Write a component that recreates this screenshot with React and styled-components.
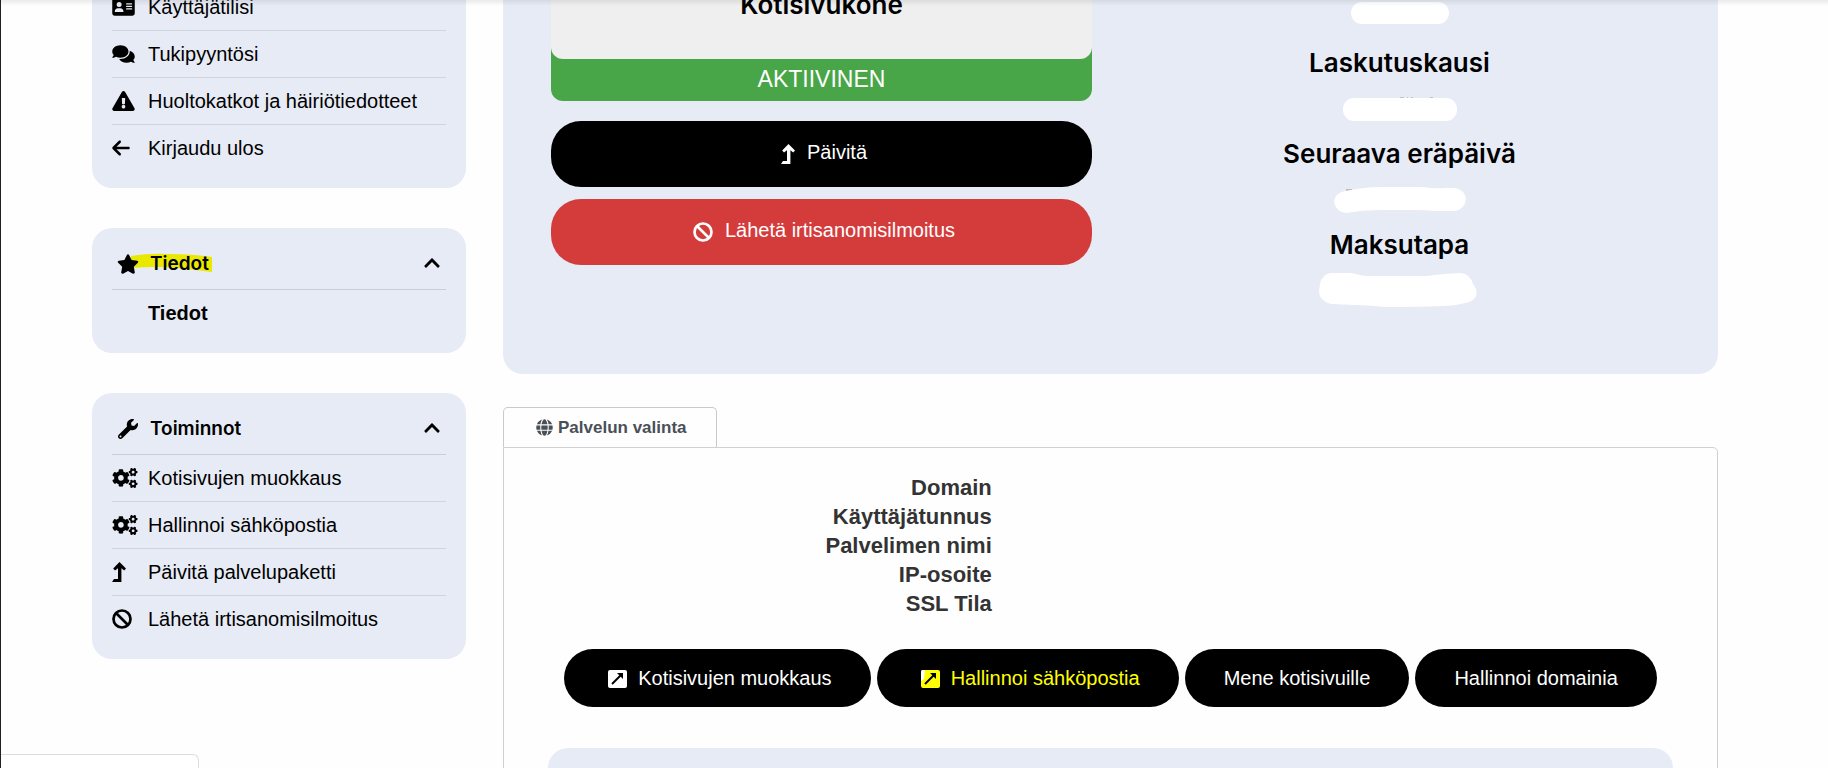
import styled, { createGlobalStyle } from 'styled-components';
import {
  FaChevronUp,
  FaCogs,
  FaComments,
  FaExclamationTriangle,
  FaGlobe,
  FaStar,
  FaWrench,
} from 'react-icons/fa';
import { FaAddressCard, FaArrowLeft } from 'react-icons/fa6';

const LevelUpIcon = () => (
  <svg width='14' height='20' viewBox='0 0 14 20' aria-hidden='true'>
    <path
      d='M7.5 0L14 6.4L12.2 8.6L9.4 6.2V20H0L2 17H6V6.2L3 8.6L1.2 6.4Z'
      fill='currentColor'
    />
  </svg>
);

const BanIcon = () => (
  <svg width='20' height='20' viewBox='0 0 20 20' aria-hidden='true'>
    <g fill='none' stroke='currentColor' strokeWidth='2.7'>
      <circle cx='10' cy='10' r='8.5' />
      <path d='M4 4L16 16' />
    </g>
  </svg>
);

const ExternalIcon = ({ corner }) => (
  <svg width='19' height='19' viewBox='0 0 19 19' aria-hidden='true'>
    <rect x='0' y='1' width='19' height='18' rx='2' fill='currentColor' />
    {corner && <path d='M0 3Q0 1 2 1H4L3 10L0 12Z' fill='#ffffff' />}
    <path d='M4 15L13 6' stroke='#000000' strokeWidth='2' />
    <path d='M9 4H15V10Z' fill='#000000' />
  </svg>
);

const accountLinks = [
  { label: 'Käyttäjätilisi', icon: FaAddressCard, size: 23 },
  { label: 'Tukipyyntösi', icon: FaComments, size: 23 },
  { label: 'Huoltokatkot ja häiriötiedotteet', icon: FaExclamationTriangle, size: 23 },
  { label: 'Kirjaudu ulos', icon: FaArrowLeft, size: 18 },
];

const actionLinks = [
  { label: 'Kotisivujen muokkaus', icon: FaCogs, size: 26 },
  { label: 'Hallinnoi sähköpostia', icon: FaCogs, size: 26 },
  { label: 'Päivitä palvelupaketti', icon: LevelUpIcon, size: 14 },
  { label: 'Lähetä irtisanomisilmoitus', icon: BanIcon, size: 20 },
];

const details = ['Domain', 'Käyttäjätunnus', 'Palvelimen nimi', 'IP-osoite', 'SSL Tila'];

const LinkList = ({ links }) => (
  <List>
    {links.map(({ label, icon: Icon, size }) => (
      <li key={label}>
        <a href='#'>
          <LinkIcon $size={size}>
            <Icon />
          </LinkIcon>
          {label}
        </a>
      </li>
    ))}
  </List>
);

const App = () => {
  return (
    <Page>
      <GlobalStyle />
      <TopShade />
      <Layout>
        <Sidebar>
          <Panel $cut>
            <LinkList links={accountLinks} />
          </Panel>
          <Panel>
            <PanelTitle>
              <FaStar className='icon' />
              <Marked>
                <Marker viewBox='0 0 84 20' aria-hidden='true'>
                  <path d='M2 3Q20 0 40 1Q64 1 83 4V19Q66 17 48 15Q26 13 2 15Z' fill='#e9e900' />
                </Marker>
                <span>Tiedot</span>
              </Marked>
              <button aria-label='Tiedot'>
                <FaChevronUp />
              </button>
            </PanelTitle>
            <List>
              <li>
                <a href='#' className='current'>
                  <LinkIcon />
                  Tiedot
                </a>
              </li>
            </List>
          </Panel>
          <Panel>
            <PanelTitle>
              <FaWrench className='icon' />
              <span>Toiminnot</span>
              <button aria-label='Toiminnot'>
                <FaChevronUp />
              </button>
            </PanelTitle>
            <LinkList links={actionLinks} />
          </Panel>
        </Sidebar>
        <Main>
          <Overview>
            <div>
              <Product>
                <h3>Kotisivukone</h3>
                <p>AKTIIVINEN</p>
              </Product>
              <WideButton>
                <LevelUpIcon />
                Päivitä
              </WideButton>
              <WideButton $danger>
                <BanIcon />
                Lähetä irtisanomisilmoitus
              </WideButton>
            </div>
            <Billing>
              <Hidden width='98' viewBox='0 -14 98 59'>
                <rect width='98' height='22' rx='11' />
              </Hidden>
              <h4>Laskutuskausi</h4>
              <Hidden width='114' viewBox='0 -19 114 59'>
                <path d='M57 0H61M64 0H65M68 0H70M87 0H90' stroke='#999999' />
                <rect width='114' height='23' rx='11' />
              </Hidden>
              <h4>Seuraava eräpäivä</h4>
              <Hidden width='132' viewBox='0 -17 132 59'>
                <path d='M12 3H18' stroke='#888888' />
                <path d='M11 4C22 2 34 0 48 0H88Q102 2 112 1H121Q131 3 132 12Q131 22 121 24H102Q92 23 80 23H45Q28 23 12 26Q2 25 0 15Q1 6 11 4Z' />
              </Hidden>
              <h4>Maksutapa</h4>
              <Hidden width='162' viewBox='0 -12 162 59'>
                <path d='M12 0H32Q44 3 48 3H108Q122 1 142 0Q151 1 154 11Q159 17 157 23Q154 29 146 30Q136 33 122 33Q96 34 66 34Q48 32 36 32L12 31Q0 28 0 18L1 11Q3 1 12 0Z' />
              </Hidden>
            </Billing>
          </Overview>
          <Tab href='#'>
            <FaGlobe />
            Palvelun valinta
          </Tab>
          <TabPanel>
            <Details>
              {details.map((name) => (
                <div key={name}>
                  <dt>{name}</dt>
                  <dd />
                </div>
              ))}
            </Details>
            <Actions>
              <ActionButton>
                <ExternalIcon />
                Kotisivujen muokkaus
              </ActionButton>
              <ActionButton $marked>
                <ExternalIcon corner />
                Hallinnoi sähköpostia
              </ActionButton>
              <ActionButton>Mene kotisivuille</ActionButton>
              <ActionButton>Hallinnoi domainia</ActionButton>
            </Actions>
            <NextCard />
          </TabPanel>
        </Main>
      </Layout>
      <StatusBar />
    </Page>
  );
};

const GlobalStyle = createGlobalStyle`
  * {
    box-sizing: border-box;
    margin: 0;
    padding: 0;
  }

  body {
    background: #fefefe;
    color: #000000;
    font-family: 'Liberation Sans', Arial, sans-serif;
    font-size: 20px;
  }

  a {
    color: inherit;
    text-decoration: none;
  }

  button {
    border: 0;
    font: inherit;
    cursor: pointer;
  }
`;

const Page = styled.div`
  position: relative;
  height: 100vh;
  overflow: hidden;
  border-left: 1px solid #231f20;
`;

const TopShade = styled.div`
  position: absolute;
  top: 0;
  left: 0;
  right: 0;
  z-index: 1;
  height: 6px;
  background: linear-gradient(rgba(0, 0, 0, 0.08), rgba(0, 0, 0, 0));
`;

/* the page stands scrolled a little way into its first rows */
const Layout = styled.div`
  display: grid;
  grid-template-columns: 374px 1fr;
  align-items: start;
  gap: 37px;
  margin-top: -16px;
  padding: 0 110px 0 91px;
`;

const Sidebar = styled.aside`
  display: flex;
  flex-direction: column;
  gap: 40px;
`;

const Panel = styled.section`
  padding: 0 20px 17px;
  border-radius: ${({ $cut }) => ($cut ? '0 0 20px 20px' : '20px')};
  background: #e7ebf5;
`;

const PanelTitle = styled.h2`
  display: flex;
  align-items: center;
  height: 62px;
  padding: 10px 5px 0;
  border-bottom: 1px solid #c9ced8;
  font-family: Inter, sans-serif;
  font-size: 19px;
  font-weight: 600;

  .icon {
    position: relative;
    z-index: 1;
    width: 22px;
    height: 20px;
    margin-right: 11px;
  }

  button {
    display: flex;
    margin: 0 0 2px auto;
    background: none;
    color: #000000;
    font-size: 18px;
  }
`;

const Marked = styled.span`
  position: relative;

  span {
    position: relative;
  }
`;

const Marker = styled.svg`
  position: absolute;
  top: 1px;
  left: -21px;
  width: 84px;
  height: 20px;
`;

const LinkIcon = styled.span`
  display: flex;
  width: 36px;

  svg {
    width: ${({ $size }) => $size}px;
    height: 20px;
  }
`;

const List = styled.ul`
  list-style: none;

  li + li {
    border-top: 1px solid #cfd4dd;
  }

  a {
    display: flex;
    align-items: center;
    height: 46px;
    white-space: nowrap;
  }

  .current {
    font-weight: bold;
  }
`;

const Main = styled.main`
  min-width: 0;
`;

const Overview = styled.section`
  display: grid;
  grid-template-columns: 1fr 1fr;
  gap: 37px;
  height: 390px;
  padding: 0 48px;
  border-radius: 0 0 20px 20px;
  background: #e7ebf5;
`;

const Product = styled.div`
  margin-bottom: 20px;
  border-radius: 0 0 12px 12px;
  background: #48a648;
  text-align: center;

  h3 {
    height: 75px;
    padding-top: 5px;
    border-radius: 0 0 12px 12px;
    background: #efefef;
    font-family: Inter, sans-serif;
    font-size: 26px;
    font-weight: 600;
    line-height: 32px;
  }

  p {
    padding-bottom: 2px;
    color: #ffffff;
    font-size: 23px;
    line-height: 40px;
  }
`;

const WideButton = styled.button`
  display: flex;
  justify-content: center;
  align-items: center;
  gap: 12px;
  width: 100%;
  height: 66px;
  margin-bottom: 12px;
  padding: 0 0 4px 5px;
  border-radius: 30px;
  background: ${({ $danger }) => ($danger ? '#d43c3c' : '#000000')};
  color: #ffffff;

  svg {
    margin-top: 3px;
  }
`;

const Billing = styled.div`
  display: flex;
  flex-direction: column;
  align-items: center;
  padding-top: 4px;

  h4 {
    font-family: Inter, sans-serif;
    font-size: 26px;
    font-weight: 600;
    line-height: 32px;
  }
`;

const Hidden = styled.svg`
  flex: none;
  height: 59px;
  fill: #ffffff;
`;

const Tab = styled.a`
  display: inline-flex;
  align-items: center;
  gap: 5px;
  height: 40px;
  margin-top: 33px;
  padding: 0 29px 0 32px;
  border: 1px solid #c8cacd;
  border-bottom: 0;
  border-radius: 5px 5px 0 0;
  color: #495057;
  font-size: 17px;
  font-weight: bold;
  vertical-align: bottom;
`;

const TabPanel = styled.section`
  padding: 25px 44px 0;
  border: 1px solid #d0d1d3;
  border-radius: 0 5px 0 0;
`;

const Details = styled.dl`
  color: #333333;
  font-size: 22px;
  font-weight: bold;
  line-height: 29px;

  div {
    display: grid;
    grid-template-columns: 5fr 7fr;
  }

  dt {
    padding-right: 25px;
    text-align: right;
  }
`;

const Actions = styled.div`
  display: flex;
  justify-content: center;
  gap: 6px;
  margin: 31px 0 41px;
`;

const ActionButton = styled.button`
  display: flex;
  align-items: center;
  gap: 11px;
  height: 58px;
  padding: 0 39px;
  border-radius: 29px;
  background: #000000;
  color: ${({ $marked }) => ($marked ? '#ffff00' : '#ffffff')};
  white-space: nowrap;

  svg {
    margin-left: 5px;
  }
`;

const NextCard = styled.div`
  height: 120px;
  border-radius: 20px 20px 0 0;
  background: #e7ebf5;
`;

const StatusBar = styled.div`
  position: absolute;
  bottom: 0;
  left: 0;
  width: 198px;
  height: 14px;
  border: 1px solid #dddddd;
  border-width: 1px 1px 0 0;
  border-radius: 0 6px 0 0;
  background: #ffffff;
`;

export default App;
